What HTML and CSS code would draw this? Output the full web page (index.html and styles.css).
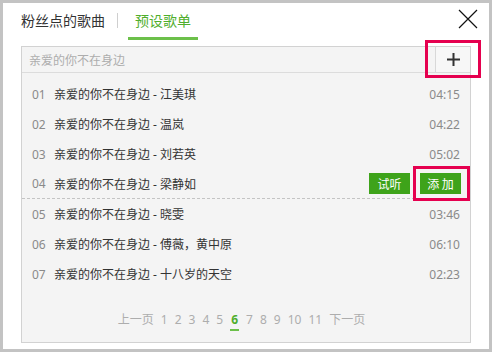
FILE: index.html
```html
<!DOCTYPE html>
<html lang="zh-CN">
<head>
<meta charset="utf-8">
<link rel="stylesheet" href="styles.css">
</head>
<body>
<div class="page">
  <div class="dialog">
    <div class="header">
      <span class="tab">粉丝点的歌曲</span>
      <span class="sep"></span>
      <span class="tab active">预设歌单</span>
      <span class="close">
        <svg width="20" height="20" viewBox="0 0 20 20"><path d="M1 1 L19 19 M19 1 L1 19" stroke="#111" stroke-width="1.2" fill="none"/></svg>
      </span>
    </div>
    <div class="panel">
      <div class="search">
        <span class="placeholder">亲爱的你不在身边</span>
        <span class="add">
          <svg width="13" height="13" viewBox="0 0 13 13"><path d="M0 6.5 H13 M6.5 0 V13" stroke="#333" stroke-width="2" fill="none"/></svg>
        </span>
      </div>
      <ul class="list">
        <li class="row"><span class="num">01</span><span class="title">亲爱的你不在身边 - 江美琪</span><span class="dur">04:15</span></li>
        <li class="row"><span class="num">02</span><span class="title">亲爱的你不在身边 - 温岚</span><span class="dur">04:22</span></li>
        <li class="row"><span class="num">03</span><span class="title">亲爱的你不在身边 - 刘若英</span><span class="dur">05:02</span></li>
        <li class="row hover"><span class="num">04</span><span class="title">亲爱的你不在身边 - 梁静如</span><span class="btns"><span class="btn">试听</span><span class="btn">添 加</span></span></li>
        <li class="row"><span class="num">05</span><span class="title">亲爱的你不在身边 - 晓雯</span><span class="dur">03:46</span></li>
        <li class="row"><span class="num">06</span><span class="title">亲爱的你不在身边 - 傅薇，黄中原</span><span class="dur">06:10</span></li>
        <li class="row"><span class="num">07</span><span class="title">亲爱的你不在身边 - 十八岁的天空</span><span class="dur">02:23</span></li>
      </ul>
      <div class="pager">
        <span>上一页</span><span>1</span><span>2</span><span>3</span><span>4</span><span>5</span><span class="cur">6</span><span>7</span><span>8</span><span>9</span><span>10</span><span>11</span><span>下一页</span>
      </div>
    </div>
  </div>
  <div class="mark mark-add"></div>
  <div class="mark mark-btn"></div>
</div>
</body>
</html>
```
FILE: styles.css
```css
html, body {
  margin: 0;
  padding: 0;
  background: #fff;
}
body {
  font-family: "Noto Sans", "Noto Sans CJK SC", sans-serif;
  font-size: 12px;
  color: #333;
}
.page {
  position: relative;
  width: 494px;
  height: 356px;
}
.dialog {
  width: 492px;
  height: 352px;
  box-sizing: border-box;
  border: 3px solid #c3c3c3;
  background: #fff;
  padding: 0 18px;
}
.header {
  height: 37px;
  display: flex;
  align-items: flex-end;
  margin-bottom: 6px;
}
.tab {
  font-family: "Noto Sans CJK SC", sans-serif;
  font-size: 14px;
  line-height: 20px;
  padding-bottom: 10px;
  color: #333;
}
.tab.active {
  color: #4fae2c;
  padding: 0 7px 7px;
  border-bottom: 3px solid #6cc04a;
}
.sep {
  width: 1px;
  height: 15px;
  background: #cfcfcf;
  margin: 0 10px 12px 12px;
}
.close {
  margin-left: auto;
  align-self: flex-start;
  margin-top: 6px;
  margin-right: -7px;
  width: 20px;
  height: 20px;
  display: flex;
}
.panel {
  height: 297px;
  box-sizing: border-box;
  border: 1px solid #d2d2d2;
  background: #f4f4f4;
}
.search {
  height: 25px;
  border-bottom: 1px solid #dcdcdc;
  display: flex;
  align-items: center;
}
.placeholder {
  font-family: "Noto Sans CJK SC", sans-serif;
  padding-left: 7px;
  color: #adadad;
  flex: 1;
}
.add {
  width: 34px;
  height: 25px;
  border-left: 1px solid #d8d8d8;
  background: #f7f7f7;
  display: flex;
  align-items: center;
  justify-content: center;
}
.list {
  list-style: none;
  margin: 0;
  padding: 6px 0 0;
}
.row {
  height: 30px;
  display: flex;
  align-items: center;
  padding: 0 10px 0 10px;
}
.row.hover {
  height: 29px;
  border-bottom: 1px dashed #c4c4c4;
  padding-right: 9px;
}
.num {
  color: #8a8a8a;
  width: 22px;
}
.title {
  font-family: "Noto Sans", "Noto Sans CJK SC", sans-serif;
  color: #333;
}
.dur {
  margin-left: auto;
  color: #8a8a8a;
}
.btns {
  margin-left: auto;
  display: flex;
  gap: 10px;
}
.btn {
  width: 41px;
  height: 21px;
  line-height: 21px;
  text-align: center;
  background: #3ea31a;
  color: #fff;
  font-family: "Noto Sans CJK SC", sans-serif;
}
.pager {
  margin-top: 22px;
  display: flex;
  justify-content: center;
  gap: 7px;
  line-height: 18px;
  color: #adadad;
  padding-right: 9px;
}
.pager .cur {
  color: #4fae2c;
  font-weight: bold;
  border-bottom: 2px solid #6cc04a;
  padding: 0 1px;
}
.mark {
  position: absolute;
  box-sizing: border-box;
  border: 3px solid #e5004f;
}
.mark-add {
  left: 425px;
  top: 40px;
  width: 56px;
  height: 38px;
}
.mark-btn {
  left: 413px;
  top: 166px;
  width: 57px;
  height: 35px;
}
```
